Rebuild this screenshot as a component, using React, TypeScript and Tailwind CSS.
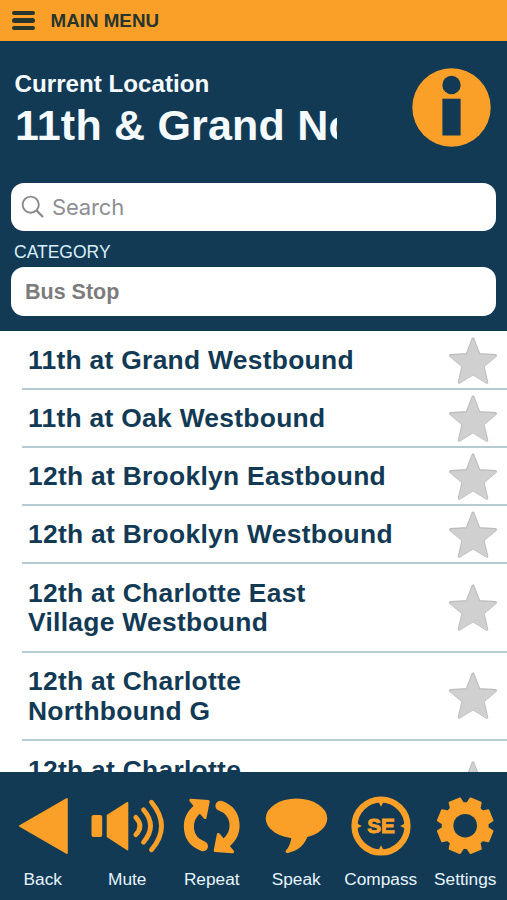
import React from "react";

const ORANGE = "#faa028";
const NAVY = "#123a54";

type Stop = { lines: string[]; tall?: boolean };

const stops: Stop[] = [
  { lines: ["11th at Grand Westbound"] },
  { lines: ["11th at Oak Westbound"] },
  { lines: ["12th at Brooklyn Eastbound"] },
  { lines: ["12th at Brooklyn Westbound"] },
  { lines: ["12th at Charlotte East", "Village Westbound"], tall: true },
  { lines: ["12th at Charlotte", "Northbound G"], tall: true },
  { lines: ["12th at Charlotte", "\u00a0"], tall: true },
];

function Star() {
  const d =
    "M25 3 L31 18.6 L47.5 19.6 L35 30 L38.8 46.3 L25 37.8 L11.2 46.3 L15 30 L2.5 19.6 L19 18.6 Z";
  return (
    <svg width="50" height="50" viewBox="0 0 50 50" className="shrink-0" strokeLinejoin="round" strokeWidth="3">
      <path d={d} fill="#bcbcbc" stroke="#bcbcbc" />
      <path d={d} fill="#d0d0d0" stroke="#d0d0d0" strokeWidth="2" transform="translate(0.9 1.3) scale(.965)" />
    </svg>
  );
}

function StopRow({ stop }: { stop: Stop }) {
  return (
    <li className={`flex shrink-0 ${stop.tall ? "h-[88.5px]" : "h-[58px]"}`}>
      <div className="ml-[22px] flex flex-1 items-center justify-between border-b-2 border-[#b4cbd3] pl-[6px] pr-[9px] pt-px">
        <div className="whitespace-nowrap pt-px text-[26.4px] font-bold leading-[29.5px] tracking-[0.29px] text-[#123a54]">
          {stop.lines.map((line) => (
            <div key={line}>{line}</div>
          ))}
        </div>
        <Star />
      </div>
    </li>
  );
}

const gearPoints = Array.from({ length: 8 }, (_, i) => 22.5 + i * 45)
  .flatMap((a) => [
    [a - 17, 22.5],
    [a - 11.5, 27.8],
    [a + 11.5, 27.8],
    [a + 17, 22.5],
  ])
  .map(([deg, r]) => {
    const t = (deg * Math.PI) / 180;
    return `${(464.7 + r * Math.sin(t)).toFixed(2)},${(825.7 - r * Math.cos(t)).toFixed(2)}`;
  })
  .join(" ");

function RepeatArrow() {
  return (
    <>
      <path d="M203 846.2 C186 840 184.5 820 197.5 809" fill="none" stroke={ORANGE} strokeWidth="10" strokeLinecap="round" />
      <path d="M190.8 800.2 L208.2 801.4 L205 817.6 Z" fill={ORANGE} stroke={ORANGE} strokeWidth="3" strokeLinejoin="round" />
    </>
  );
}

const actions = [
  {
    label: "Back",
    icon: <path d="M20 826 L66.8 799 V853 Z" fill={ORANGE} stroke={ORANGE} strokeWidth="2" strokeLinejoin="round" />,
  },
  {
    label: "Mute",
    icon: (
      <g fill={ORANGE}>
        <rect x="91" y="815" width="10.7" height="22" rx="2" />
        <path d="M107 815.5 L127 802.8 V849.7 L107 836.5 Z" stroke={ORANGE} strokeWidth="1.6" strokeLinejoin="round" />
        <g fill="none" stroke={ORANGE} strokeLinecap="round" strokeWidth="4.8">
          <path d="M135.3 817.3 Q143.5 826 135.3 834.7" />
          <path d="M143 809.8 Q157 826 143 842.2" />
          <path d="M151 802.2 Q171 826 151 849.8" />
        </g>
      </g>
    ),
  },
  {
    label: "Repeat",
    icon: (
      <>
        <RepeatArrow />
        <g transform="rotate(180 211.7 826)">
          <RepeatArrow />
        </g>
      </>
    ),
  },
  {
    label: "Speak",
    icon: (
      <g fill={ORANGE}>
        <ellipse cx="296" cy="818.4" rx="30.8" ry="19.8" />
        <path d="M291 836 Q290.5 845 285.2 850.8 Q284.5 853.4 287.5 853 Q303.5 849 307.5 835 Z" />
      </g>
    ),
  },
  {
    label: "Compass",
    icon: (
      <>
        <circle cx="381" cy="826" r="26.5" fill="none" stroke={ORANGE} strokeWidth="6.2" />
        <path
          d="M378.5 802 L381 806.8 L383.5 802 Z M378.5 850 L381 845.2 L383.5 850 Z M357 823.5 L361.8 826 L357 828.5 Z M405 823.5 L400.2 826 L405 828.5 Z"
          fill={ORANGE}
        />
        <text
          x="381"
          y="833.4"
          textAnchor="middle"
          fontSize="20.8"
          fontWeight="700"
          fill={ORANGE}
          stroke={ORANGE}
          strokeWidth="0.9"
        >
          SE
        </text>
      </>
    ),
  },
  {
    label: "Settings",
    icon: (
      <>
        <polygon points={gearPoints} fill={ORANGE} stroke={ORANGE} strokeWidth="2" strokeLinejoin="round" />
        <circle cx="464.7" cy="825.7" r="11.8" fill={NAVY} />
      </>
    ),
  },
];

export default function App() {
  return (
    <div className="flex h-[900px] w-[507px] flex-col overflow-hidden bg-white font-['Liberation_Sans',Arial,sans-serif]">
      <header className="flex h-[41px] shrink-0 items-center bg-[#faa028] pl-[11.5px]">
        <div className="flex w-[23px] flex-col gap-[3px]">
          <span className="h-[4.5px] rounded-full bg-[#26352e]" />
          <span className="h-[4.5px] rounded-full bg-[#26352e]" />
          <span className="h-[4.5px] rounded-full bg-[#26352e]" />
        </div>
        <h1 className="ml-4 text-[18.8px] font-bold leading-5 text-[#26352e]">MAIN MENU</h1>
      </header>

      <section className="flex h-[290px] shrink-0 flex-col bg-[#123a54]">
        <div className="flex h-[142px] shrink-0 justify-between pl-[14px] pr-4">
          <div className="w-[323px] overflow-hidden whitespace-nowrap pt-[28px] font-bold text-[#f4fafe]">
            <div className="pl-[0.5px] pt-px text-[24.2px] leading-[28px]">Current Location</div>
            <div className="pl-px text-[43px] leading-[54px] tracking-[0.2px]">11th &amp; Grand No</div>
          </div>
          <svg width="79" height="79" viewBox="0 0 79 79" className="mt-[27px]">
            <circle cx="39.5" cy="39.5" r="39.2" fill={ORANGE} />
            <circle cx="39.5" cy="17" r="9.2" fill={NAVY} />
            <rect x="30.4" y="30.7" width="18.2" height="36.8" fill={NAVY} />
          </svg>
        </div>
        <div className="mx-[11px] flex h-[48px] items-center rounded-[13px] bg-white pl-[10px]">
          <svg width="24" height="24" viewBox="0 0 24 24" fill="none" stroke="#8b8b8f" strokeWidth="1.9">
            <circle cx="9.7" cy="9.7" r="8.1" />
            <path d="M15.6 15.6 L22 22" strokeWidth="2.2" />
          </svg>
          <span className="ml-[7px] pt-px font-['Inter',sans-serif] text-[22px] tracking-[-0.15px] text-[#8e8e93]">
            Search
          </span>
        </div>
        <div className="flex h-[36px] items-center pl-[14px] pt-[6px] text-[17.5px] leading-5 text-[#d8eefa]">CATEGORY</div>
        <div className="mx-[11px] flex h-[49px] items-center rounded-[13px] bg-white pl-[14px] pt-[2px] text-[21.5px] font-bold text-[#7c7c7c]">
          Bus Stop
        </div>
      </section>

      <ul className="flex h-[441px] shrink-0 flex-col overflow-hidden pt-px">
        {stops.map((stop, i) => (
          <StopRow key={i} stop={stop} />
        ))}
      </ul>

      <nav className="flex h-[128px] shrink-0 bg-[#123a54]">
        {actions.map(({ label, icon }, i) => (
          <button key={label} className="flex w-[84.5px] flex-col items-center pt-[18px]">
            <svg width="84.5" height="70" viewBox={`${i * 84.5} 790 84.5 70`} className="shrink-0 overflow-visible">
              {icon}
            </svg>
            <span className="ml-px mt-[9px] text-[17.3px] leading-5 text-[#e6f4fc]">{label}</span>
          </button>
        ))}
      </nav>
    </div>
  );
}
